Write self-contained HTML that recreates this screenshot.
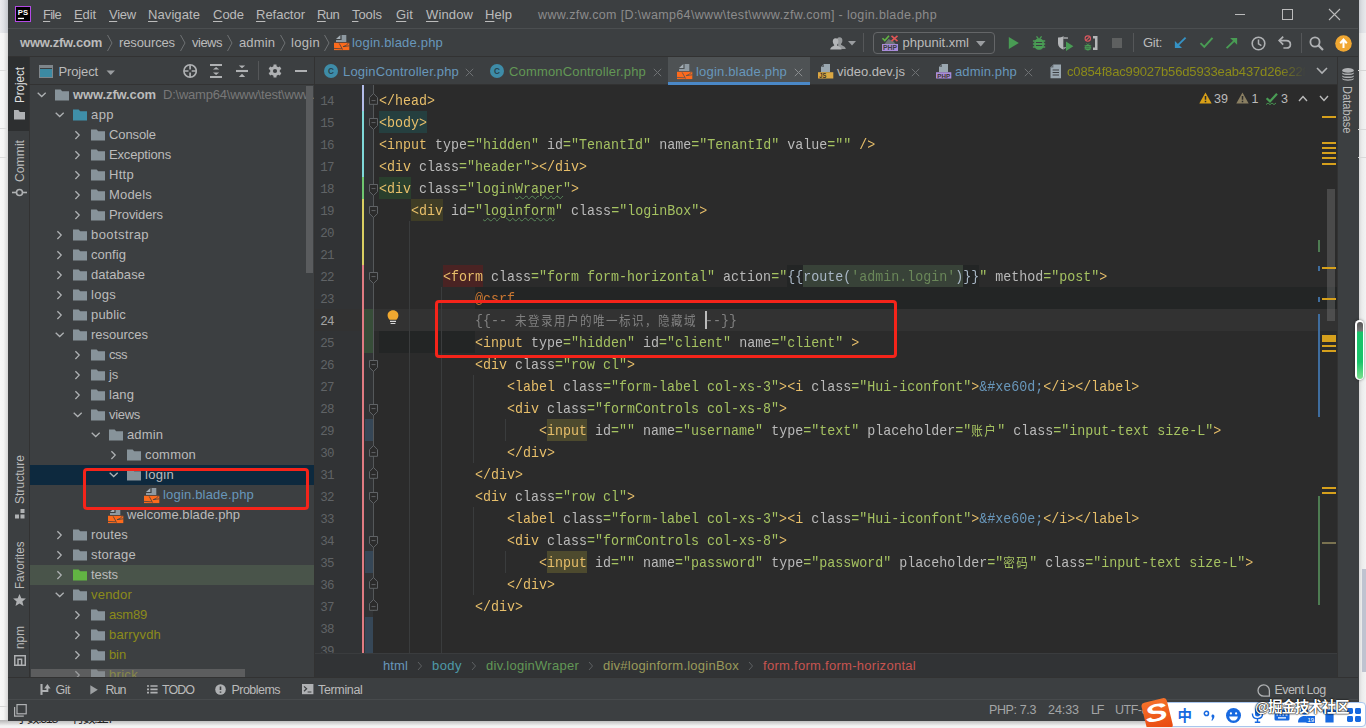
<!DOCTYPE html>
<html><head><meta charset="utf-8"><title>login.blade.php - PhpStorm</title>
<style>
*{box-sizing:border-box;margin:0;padding:0}
html,body{width:1366px;height:728px;overflow:hidden;background:#fff}
body{position:relative;font-family:"Liberation Sans","Noto Sans CJK SC",sans-serif;font-size:13px;color:#bbb}
.ln{position:absolute;left:0;width:19px;text-align:right;font-family:"Liberation Mono",monospace;font-size:12.5px;letter-spacing:-0.6px;height:22px;line-height:22px}
.cl{position:absolute;left:64px;height:22px;line-height:22px;font-family:"Liberation Mono","Noto Sans CJK SC",monospace;font-size:15px;color:#a9b7c6;white-space:pre;transform:scaleX(.88889);transform-origin:0 50%}
.cj{font-family:"Noto Sans CJK SC",sans-serif;font-size:13px;letter-spacing:1.625px;line-height:8px;display:inline-block;vertical-align:baseline}
.tg{color:#e8bf6a}.an{color:#bababa}.av{color:#a5c261}.cm{color:#808080}.en{color:#6897bb}
.typo{text-decoration:underline wavy #5a8a5a 1px;text-underline-offset:2px}
</style></head>
<body>
<div style="position:absolute;left:0;top:0;width:8px;height:728px;background:linear-gradient(90deg,#f7f7f7 0,#f4f4f4 45%,#d6d6d6 100%)"></div><div style="position:absolute;left:0;top:0;width:8px;height:33px;background:linear-gradient(90deg,#eaebee 0,#dfe1e5 45%,#c4c7cc 100%)"></div><div style="position:absolute;left:0px;top:720px;width:1366px;height:8px;background:#f3f3f3;"></div><div style="position:absolute;left:0;top:720px;width:1366px;height:6px;background:linear-gradient(#b4b4b4,#f3f3f3)"></div><div style="position:absolute;left:0px;top:705.5px;width:8px;height:1px;background:#d6d6d6;"></div><span style="position:absolute;left:16px;top:711.5px;line-height:14px;white-space:pre;color:#222;font-family:'Liberation Sans','Noto Sans CJK SC',sans-serif;font-size:12.5px;font-weight:normal;letter-spacing:-1.391px;">字数:518</span><span style="position:absolute;left:72px;top:711.5px;line-height:14px;white-space:pre;color:#222;font-family:'Liberation Sans','Noto Sans CJK SC',sans-serif;font-size:12.5px;font-weight:normal;letter-spacing:-1.391px;">行数:127</span><div style="position:absolute;left:1358px;top:0;width:8px;height:720px;background:linear-gradient(90deg,#d2d2d2 0,#ececec 50%,#f3f3f3 100%)"></div><div style="position:absolute;left:1358px;top:0;width:8px;height:33px;background:linear-gradient(90deg,#c2c5ca 0,#dcdee2 50%,#e8e9ec 100%)"></div><div style="position:absolute;left:7.5px;top:0px;width:1351px;height:720.5px;background:#3c3f41;"></div><div style="position:absolute;left:8px;top:28px;width:1350px;height:1px;background:#4b4e50;"></div><svg style="position:absolute;left:15px;top:6px;" width="16" height="16" viewBox="0 0 16 16"><rect x="0.5" y="0.5" width="15" height="15" fill="#000" stroke="#b34ae6" stroke-width="1"/><text x="2.8" y="9.3" font-family="Liberation Sans,sans-serif" font-weight="bold" font-size="8" fill="#fff" textLength="10.2" lengthAdjust="spacingAndGlyphs">PS</text><rect x="2.9" y="11.8" width="6.1" height="1.3" fill="#fff"/></svg><span style="position:absolute;left:43px;top:5.6px;line-height:18px;white-space:pre;color:#bbbbbb;font-family:'Liberation Sans','Noto Sans CJK SC',sans-serif;font-size:13px;font-weight:normal;letter-spacing:-0.738px;"><u style="text-underline-offset:1.5px">F</u>ile</span><span style="position:absolute;left:74px;top:5.6px;line-height:18px;white-space:pre;color:#bbbbbb;font-family:'Liberation Sans','Noto Sans CJK SC',sans-serif;font-size:13px;font-weight:normal;letter-spacing:-0.102px;"><u style="text-underline-offset:1.5px">E</u>dit</span><span style="position:absolute;left:109px;top:5.6px;line-height:18px;white-space:pre;color:#bbbbbb;font-family:'Liberation Sans','Noto Sans CJK SC',sans-serif;font-size:13px;font-weight:normal;letter-spacing:-0.238px;"><u style="text-underline-offset:1.5px">V</u>iew</span><span style="position:absolute;left:148px;top:5.6px;line-height:18px;white-space:pre;color:#bbbbbb;font-family:'Liberation Sans','Noto Sans CJK SC',sans-serif;font-size:13px;font-weight:normal;letter-spacing:0.086px;"><u style="text-underline-offset:1.5px">N</u>avigate</span><span style="position:absolute;left:213px;top:5.6px;line-height:18px;white-space:pre;color:#bbbbbb;font-family:'Liberation Sans','Noto Sans CJK SC',sans-serif;font-size:13px;font-weight:normal;letter-spacing:-0.020px;"><u style="text-underline-offset:1.5px">C</u>ode</span><span style="position:absolute;left:256px;top:5.6px;line-height:18px;white-space:pre;color:#bbbbbb;font-family:'Liberation Sans','Noto Sans CJK SC',sans-serif;font-size:13px;font-weight:normal;letter-spacing:-0.018px;"><u style="text-underline-offset:1.5px">R</u>efactor</span><span style="position:absolute;left:317px;top:5.6px;line-height:18px;white-space:pre;color:#bbbbbb;font-family:'Liberation Sans','Noto Sans CJK SC',sans-serif;font-size:13px;font-weight:normal;letter-spacing:-0.620px;"><u style="text-underline-offset:1.5px">R</u>un</span><span style="position:absolute;left:352px;top:5.6px;line-height:18px;white-space:pre;color:#bbbbbb;font-family:'Liberation Sans','Noto Sans CJK SC',sans-serif;font-size:13px;font-weight:normal;letter-spacing:-0.072px;"><u style="text-underline-offset:1.5px">T</u>ools</span><span style="position:absolute;left:396px;top:5.6px;line-height:18px;white-space:pre;color:#bbbbbb;font-family:'Liberation Sans','Noto Sans CJK SC',sans-serif;font-size:13px;font-weight:normal;letter-spacing:0.125px;"><u style="text-underline-offset:1.5px">G</u>it</span><span style="position:absolute;left:426px;top:5.6px;line-height:18px;white-space:pre;color:#bbbbbb;font-family:'Liberation Sans','Noto Sans CJK SC',sans-serif;font-size:13px;font-weight:normal;letter-spacing:0.125px;"><u style="text-underline-offset:1.5px">W</u>indow</span><span style="position:absolute;left:485px;top:5.6px;line-height:18px;white-space:pre;color:#bbbbbb;font-family:'Liberation Sans','Noto Sans CJK SC',sans-serif;font-size:13px;font-weight:normal;letter-spacing:0.062px;"><u style="text-underline-offset:1.5px">H</u>elp</span><span style="position:absolute;left:538px;top:5.5px;line-height:18px;white-space:pre;color:#8c8c8c;font-family:'Liberation Sans','Noto Sans CJK SC',sans-serif;font-size:12.5px;font-weight:normal;letter-spacing:0.351px;">www.zfw.com [D:\wamp64\www\test\www.zfw.com] - login.blade.php</span><svg style="position:absolute;left:1233.5px;top:7px;" width="14" height="14" viewBox="0 0 14 14"><path d="M1 7.5H11" stroke="#bbbbbb" stroke-width="1"/></svg><svg style="position:absolute;left:1281px;top:8px;" width="14" height="14" viewBox="0 0 14 14"><rect x="1.5" y="1.5" width="10" height="10" fill="none" stroke="#bbbbbb" stroke-width="1"/></svg><svg style="position:absolute;left:1328px;top:8px;" width="14" height="14" viewBox="0 0 14 14"><path d="M1 1L12 12M12 1L1 12" stroke="#bbbbbb" stroke-width="1.1"/></svg><div style="position:absolute;left:8px;top:56px;width:1350px;height:1px;background:#323232;"></div><span style="position:absolute;left:20px;top:34.0px;line-height:18px;white-space:pre;color:#bbbbbb;font-family:'Liberation Sans','Noto Sans CJK SC',sans-serif;font-size:13px;font-weight:bold;letter-spacing:-0.206px;">www.zfw.com</span><span style="position:absolute;left:119px;top:34.0px;line-height:18px;white-space:pre;color:#bbbbbb;font-family:'Liberation Sans','Noto Sans CJK SC',sans-serif;font-size:13px;font-weight:normal;letter-spacing:-0.120px;">resources</span><span style="position:absolute;left:192px;top:34.0px;line-height:18px;white-space:pre;color:#bbbbbb;font-family:'Liberation Sans','Noto Sans CJK SC',sans-serif;font-size:13px;font-weight:normal;letter-spacing:-0.503px;">views</span><span style="position:absolute;left:239px;top:34.0px;line-height:18px;white-space:pre;color:#bbbbbb;font-family:'Liberation Sans','Noto Sans CJK SC',sans-serif;font-size:13px;font-weight:normal;letter-spacing:0.116px;">admin</span><span style="position:absolute;left:291px;top:34.0px;line-height:18px;white-space:pre;color:#bbbbbb;font-family:'Liberation Sans','Noto Sans CJK SC',sans-serif;font-size:13px;font-weight:normal;letter-spacing:0.306px;">login</span><svg style="position:absolute;left:106px;top:34px;" width="8" height="18" viewBox="0 0 8 18"><path d="M1.5 1L6 9L1.5 17" fill="none" stroke="#6e7173" stroke-width="1"/></svg><svg style="position:absolute;left:179px;top:34px;" width="8" height="18" viewBox="0 0 8 18"><path d="M1.5 1L6 9L1.5 17" fill="none" stroke="#6e7173" stroke-width="1"/></svg><svg style="position:absolute;left:226px;top:34px;" width="8" height="18" viewBox="0 0 8 18"><path d="M1.5 1L6 9L1.5 17" fill="none" stroke="#6e7173" stroke-width="1"/></svg><svg style="position:absolute;left:279px;top:34px;" width="8" height="18" viewBox="0 0 8 18"><path d="M1.5 1L6 9L1.5 17" fill="none" stroke="#6e7173" stroke-width="1"/></svg><svg style="position:absolute;left:323px;top:34px;" width="8" height="18" viewBox="0 0 8 18"><path d="M1.5 1L6 9L1.5 17" fill="none" stroke="#6e7173" stroke-width="1"/></svg><span style="position:absolute;left:352px;top:34.0px;line-height:18px;white-space:pre;color:#6897bb;font-family:'Liberation Sans','Noto Sans CJK SC',sans-serif;font-size:13px;font-weight:normal;letter-spacing:0.186px;">login.blade.php</span><svg style="position:absolute;left:333.8px;top:34px;" width="16" height="17" viewBox="0 0 16 17"><path d="M6.4 0.9V5H2Z" fill="#a4aeb5"/><path d="M7.6 0.9H12.3V8H2V6.1H7.6Z" fill="#8e99a1"/><rect x="0" y="8.8" width="15.3" height="7.3" fill="#fc6a1c"/><path d="M0 14.4L7.9 14.8M9.2 12.6L15.3 11.8M5.2 9.4L8.6 15.6M14.6 8.8L12 11.6L9.2 12.6" stroke="#3c3f41" stroke-width="0.9" fill="none" opacity="0.85"/></svg><svg style="position:absolute;left:830px;top:36px;" width="16" height="14" viewBox="0 0 16 14"><path d="M9.5 1.2C11.6 1.2 12.6 2.8 12.4 4.8C12.2 6.6 11.4 7.6 10.9 8.2C10.9 9.4 15.5 9.8 15.8 13H6.5C7 11 8.5 10.2 8.2 8.4C7.4 7.6 6.8 6.4 6.7 4.8C6.6 2.8 7.6 1.2 9.5 1.2Z" fill="#96999b"/><path d="M5.6 2.2C7.6 2.2 8.6 3.8 8.4 5.8C8.2 7.4 7.5 8.4 7 9C7 10.2 11.2 10.6 11.6 13.5H0.2C0.6 10.6 4.3 10.2 4.3 9C3.7 8.4 3 7.4 2.8 5.8C2.6 3.8 3.6 2.2 5.6 2.2Z" fill="#b4b6b8"/></svg><svg style="position:absolute;left:848px;top:41px;" width="8" height="5" viewBox="0 0 8 5"><path d="M0 0H8L4 4.5Z" fill="#9a9da0"/></svg><div style="position:absolute;left:863px;top:33px;width:1px;height:19px;background:#555759;"></div><div style="position:absolute;left:873px;top:32px;width:122px;height:22px;border:1px solid #646668;border-radius:4px"></div><svg style="position:absolute;left:881px;top:35px;" width="18" height="17" viewBox="0 0 18 17"><path d="M3 9.5L7.5 4L12.5 6.5L15 9.5Z" fill="#6e7476"/><rect x="1" y="9" width="16" height="7" fill="#a98cd9"/><text x="9" y="15.4" text-anchor="middle" font-family="Liberation Sans,sans-serif" font-weight="bold" font-size="6.6" fill="#3c3f41" textLength="14" lengthAdjust="spacingAndGlyphs">PHP</text><path d="M1.5 3.2L3.8 5.6L8 0.8" stroke="#62b543" stroke-width="1.6" fill="none"/><path d="M10.5 0.8L16.5 6.2M16.5 0.8L10.5 6.2" stroke="#e05555" stroke-width="1.6"/></svg><span style="position:absolute;left:902.5px;top:34.0px;line-height:18px;white-space:pre;color:#bbbbbb;font-family:'Liberation Sans','Noto Sans CJK SC',sans-serif;font-size:13px;font-weight:normal;letter-spacing:0.001px;">phpunit.xml</span><svg style="position:absolute;left:976px;top:41px;" width="10" height="6" viewBox="0 0 10 6"><path d="M0 0H9.5L4.75 5.5Z" fill="#9a9da0"/></svg><svg style="position:absolute;left:1008px;top:36px;" width="12" height="14" viewBox="0 0 12 14"><path d="M0.8 1L10.8 7L0.8 13Z" fill="#499c54"/></svg><svg style="position:absolute;left:1032px;top:36px;" width="14" height="14" viewBox="0 0 14 14"><path d="M4.5 0.4L6.5 2.9M9.6 0.4L7.6 2.9" stroke="#499c54" stroke-width="1.3"/><path d="M7.05 2.6C10 2.6 12 4.6 12 8.2C12 11.6 10 13.8 7.05 13.8C4.1 13.8 2.1 11.6 2.1 8.2C2.1 4.6 4.1 2.6 7.05 2.6Z" fill="#499c54"/><path d="M0.9 5H13.2M0.9 8H13.2M0.9 10.9H13.2" stroke="#499c54" stroke-width="1.5"/><path d="M3.9 6.55H10.2M3.9 9.5H10.2" stroke="#3c3f41" stroke-width="1.05"/></svg><svg style="position:absolute;left:1057px;top:36px;" width="17" height="16" viewBox="0 0 17 16"><path d="M1 1.5C3 1.6 4.6 1.2 6 0.6C7.4 1.2 9 1.6 11 1.5V7.5C11 10.4 8.6 12.4 6 13.4C3.4 12.4 1 10.4 1 7.5Z" fill="#b4b6b8"/><path d="M6 0.6C7.4 1.2 9 1.6 11 1.5V7.5C11 10.4 8.6 12.4 6 13.4Z" fill="#8a8d8f"/><rect x="6.5" y="3" width="4.5" height="8" fill="#3c3f41"/><path d="M9 5.6L16.4 10.2L9 15Z" fill="#499c54"/></svg><svg style="position:absolute;left:1083px;top:35px;" width="16" height="16" viewBox="0 0 16 16"><circle cx="4.8" cy="3.6" r="2.7" fill="none" stroke="#db5860" stroke-width="1.1"/><path d="M3 5.4L6.6 1.8" stroke="#db5860" stroke-width="1.1"/><g transform="translate(1,8) scale(0.55)"><path d="M4.5 0.4L6.5 2.9M9.6 0.4L7.6 2.9" stroke="#499c54" stroke-width="1.3"/><path d="M7.05 2.6C10 2.6 12 4.6 12 8.2C12 11.6 10 13.8 7.05 13.8C4.1 13.8 2.1 11.6 2.1 8.2C2.1 4.6 4.1 2.6 7.05 2.6Z" fill="#499c54"/><path d="M0.9 5H13.2M0.9 8H13.2M0.9 10.9H13.2" stroke="#499c54" stroke-width="1.5"/><path d="M3.9 6.55H10.2M3.9 9.5H10.2" stroke="#3c3f41" stroke-width="1.05"/></g><path d="M10 1H14.5V15H10V12.6H12V3.4H10Z" fill="#b4b6b8"/></svg><div style="position:absolute;left:1112px;top:38px;width:10px;height:10.2px;background:#5e6060;"></div><div style="position:absolute;left:1133px;top:33px;width:1px;height:19px;background:#555759;"></div><span style="position:absolute;left:1143px;top:34.0px;line-height:18px;white-space:pre;color:#bbbbbb;font-family:'Liberation Sans','Noto Sans CJK SC',sans-serif;font-size:13px;font-weight:normal;letter-spacing:-0.309px;">Git:</span><svg style="position:absolute;left:1174px;top:36px;" width="13" height="13" viewBox="0 0 13 13"><path d="M11.6 1.6L4 9.2" stroke="#3592c4" stroke-width="1.9"/><path d="M0.9 5.1V11.9H8Z" fill="#3592c4"/></svg><svg style="position:absolute;left:1199px;top:36px;" width="15" height="13" viewBox="0 0 15 13"><path d="M1.5 7.1L5.3 10.9L13.5 1.9" fill="none" stroke="#499c54" stroke-width="2"/></svg><svg style="position:absolute;left:1225px;top:36px;" width="13" height="13" viewBox="0 0 13 13"><path d="M1.6 12.1L9.4 4.6" stroke="#499c54" stroke-width="1.9"/><path d="M5.1 2.1L12.1 1.9V8.8Z" fill="#499c54"/></svg><svg style="position:absolute;left:1250.5px;top:35.5px;" width="15" height="15" viewBox="0 0 15 15"><circle cx="7.5" cy="7.5" r="6.3" fill="none" stroke="#afb1b3" stroke-width="1.6"/><path d="M7.5 3.6V7.8L10.4 9.6" fill="none" stroke="#afb1b3" stroke-width="1.5"/></svg><svg style="position:absolute;left:1277px;top:35px;" width="15" height="15" viewBox="0 0 15 15"><path d="M2.4 5.6H9.2C11.8 5.6 13.4 7.2 13.4 9.4C13.4 11.6 11.8 13 9.4 13H6.4" fill="none" stroke="#afb1b3" stroke-width="1.7"/><path d="M6.2 1.6L2.2 5.6L6.2 9.6" fill="none" stroke="#afb1b3" stroke-width="1.7"/></svg><div style="position:absolute;left:1300.5px;top:33px;width:1px;height:20px;background:#555759;"></div><svg style="position:absolute;left:1309px;top:36px;" width="15" height="15" viewBox="0 0 15 15"><circle cx="6" cy="6" r="4.6" fill="none" stroke="#afb1b3" stroke-width="1.8"/><path d="M9.4 9.4L14 14" stroke="#afb1b3" stroke-width="2.2"/></svg><svg style="position:absolute;left:1334.5px;top:34.5px;" width="17" height="17" viewBox="0 0 17 17"><circle cx="8.5" cy="8.5" r="8.3" fill="#f0a732"/><path d="M8.5 13V5M5.2 8.2L8.5 4.6L11.8 8.2" fill="none" stroke="#fff" stroke-width="2"/></svg><div style="position:absolute;left:8px;top:57px;width:21px;height:74px;background:#2d2f30;"></div><div style="position:absolute;left:29px;top:57px;width:1px;height:621px;background:#323232;"></div><span style="position:absolute;left:12.0px;top:103px;line-height:16px;white-space:pre;color:#e0e0e0;font-family:'Liberation Sans','Noto Sans CJK SC',sans-serif;font-size:12.5px;transform-origin:0 0;transform:rotate(-90deg) scaleX(0.9253)">Project</span><svg style="position:absolute;left:14px;top:109.5px;" width="11" height="10" viewBox="0 0 11 10"><path d="M0 0H4.4L5.8 2H11V9.5H0Z" fill="#afb1b3"/></svg><span style="position:absolute;left:12.0px;top:182px;line-height:16px;white-space:pre;color:#bbbbbb;font-family:'Liberation Sans','Noto Sans CJK SC',sans-serif;font-size:12.5px;transform-origin:0 0;transform:rotate(-90deg) scaleX(0.9753)">Commit</span><svg style="position:absolute;left:12px;top:184.5px;" width="15" height="15" viewBox="0 0 15 15"><path d="M0 7.5H15" stroke="#afb1b3" stroke-width="1.6"/><circle cx="7.5" cy="7.5" r="3" fill="#3c3f41" stroke="#afb1b3" stroke-width="1.6"/></svg><span style="position:absolute;left:12.0px;top:504px;line-height:16px;white-space:pre;color:#bbbbbb;font-family:'Liberation Sans','Noto Sans CJK SC',sans-serif;font-size:12.5px;transform-origin:0 0;transform:rotate(-90deg) scaleX(0.9661)">Structure</span><svg style="position:absolute;left:15px;top:509px;" width="10" height="10" viewBox="0 0 10 10"><rect x="0" y="5.5" width="4" height="4" fill="#afb1b3"/><rect x="5.5" y="5.5" width="4" height="4" fill="#afb1b3"/><rect x="5.5" y="0" width="4" height="4" fill="#afb1b3"/></svg><span style="position:absolute;left:12.0px;top:589px;line-height:16px;white-space:pre;color:#bbbbbb;font-family:'Liberation Sans','Noto Sans CJK SC',sans-serif;font-size:12.5px;transform-origin:0 0;transform:rotate(-90deg) scaleX(0.9240)">Favorites</span><svg style="position:absolute;left:13px;top:594px;" width="13" height="12" viewBox="0 0 13 12"><path d="M6.5 0L8.3 4.2L12.9 4.6L9.4 7.6L10.5 12L6.5 9.6L2.5 12L3.6 7.6L0.1 4.6L4.7 4.2Z" fill="#afb1b3"/></svg><span style="position:absolute;left:12.0px;top:649px;line-height:16px;white-space:pre;color:#bbbbbb;font-family:'Liberation Sans','Noto Sans CJK SC',sans-serif;font-size:12.5px;transform-origin:0 0;transform:rotate(-90deg) scaleX(0.9454)">npm</span><svg style="position:absolute;left:14px;top:655px;" width="12" height="11" viewBox="0 0 12 11"><rect x="0.75" y="0.75" width="10.5" height="9.5" fill="none" stroke="#afb1b3" stroke-width="1.5"/><path d="M4 10V4.2H7.6V10" fill="none" stroke="#afb1b3" stroke-width="1.5"/></svg><div style="position:absolute;left:30px;top:84px;width:285px;height:1px;background:#323232;"></div><span style="position:absolute;left:58.5px;top:63.0px;line-height:18px;white-space:pre;color:#bbbbbb;font-family:'Liberation Sans','Noto Sans CJK SC',sans-serif;font-size:13px;font-weight:normal;letter-spacing:-0.138px;">Project</span><svg style="position:absolute;left:39px;top:65px;" width="14" height="13" viewBox="0 0 14 13"><rect x="0.5" y="0.5" width="13" height="12" fill="#3c8aa3" stroke="#7f868b" stroke-width="1"/><rect x="0" y="0" width="14" height="3" fill="#7f868b"/><rect x="1" y="3" width="12" height="1" fill="#3c3f41"/></svg><svg style="position:absolute;left:106px;top:70px;" width="10" height="6" viewBox="0 0 10 6"><path d="M0.5 0.5H9L4.75 5Z" fill="#9a9da0"/></svg><svg style="position:absolute;left:183px;top:64px;" width="14.4" height="14.4" viewBox="0 0 14.4 14.4"><circle cx="7.1" cy="7" r="6.2" fill="none" stroke="#afb1b3" stroke-width="1.6"/><path d="M7.1 1V5.4M7.1 8.6V13M1 7H5.5M8.7 7H13.2" stroke="#afb1b3" stroke-width="1.7"/></svg><svg style="position:absolute;left:210px;top:64px;" width="12.2" height="14" viewBox="0 0 12.2 14"><path d="M0 1H12.2M0 13H12.2" stroke="#afb1b3" stroke-width="2"/><path d="M6.1 2.9L9.2 5.4H3ZM6.1 11.1L9.2 8.4H3Z" fill="#afb1b3"/></svg><svg style="position:absolute;left:236px;top:64px;" width="12" height="14" viewBox="0 0 12 14"><path d="M0 7H12" stroke="#afb1b3" stroke-width="2.1"/><path d="M6 4.2L9.2 1.4H2.8ZM6 9.8L9.2 13H2.8Z" fill="#afb1b3"/></svg><div style="position:absolute;left:258px;top:61px;width:1px;height:19px;background:#555759;"></div><svg style="position:absolute;left:268px;top:64px;" width="14" height="14" viewBox="0 0 14 14"><path d="M5.54 0.46L8.46 0.46L8.56 2.36L10.24 3.32L11.93 2.46L13.39 5.00L11.80 6.03L11.80 7.97L13.39 9.00L11.93 11.54L10.24 10.68L8.56 11.64L8.46 13.54L5.54 13.54L5.44 11.64L3.76 10.68L2.07 11.54L0.61 9.00L2.20 7.97L2.20 6.03L0.61 5.00L2.07 2.46L3.76 3.32L5.44 2.36Z" fill="#afb1b3"/><circle cx="7" cy="7" r="2.1" fill="#3c3f41"/></svg><div style="position:absolute;left:295px;top:69.9px;width:12.2px;height:2.1px;background:#afb1b3;"></div><div style="position:absolute;left:30px;top:84px;width:284px;height:594px;overflow:hidden"><svg style="position:absolute;left:7px;top:6px;" width="11" height="11" viewBox="0 0 11 11"><path d="M0.7 2.7L4.7 6.5L8.7 2.7" fill="none" stroke="#aeb1b3" stroke-width="1.3"/></svg><svg style="position:absolute;left:25px;top:5px;" width="14" height="12" viewBox="0 0 14 12"><path d="M0 0.5H5.6L7.2 2.3H14V11.5H0Z" fill="#87939a"/></svg><span style="position:absolute;left:43px;top:2.0px;line-height:18px;white-space:pre;color:#bbbbbb;font-family:'Liberation Sans','Noto Sans CJK SC',sans-serif;font-size:13px;font-weight:bold;letter-spacing:-0.115px;">www.zfw.com</span><span style="position:absolute;left:133px;top:2.0px;line-height:18px;white-space:pre;color:#787878;font-family:'Liberation Sans','Noto Sans CJK SC',sans-serif;font-size:13px;font-weight:normal;letter-spacing:-0.222px;">D:\wamp64\www\test\www.zfw.com</span><svg style="position:absolute;left:25px;top:26px;" width="11" height="11" viewBox="0 0 11 11"><path d="M0.7 2.7L4.7 6.5L8.7 2.7" fill="none" stroke="#aeb1b3" stroke-width="1.3"/></svg><svg style="position:absolute;left:43px;top:25px;" width="14" height="12" viewBox="0 0 14 12"><path d="M0 0.5H5.6L7.2 2.3H14V11.5H0Z" fill="#3f8fa9"/></svg><span style="position:absolute;left:61px;top:22.0px;line-height:18px;white-space:pre;color:#bbbbbb;font-family:'Liberation Sans','Noto Sans CJK SC',sans-serif;font-size:13px;font-weight:normal;letter-spacing:0.432px;">app</span><svg style="position:absolute;left:43px;top:46px;" width="11" height="11" viewBox="0 0 11 11"><path d="M2.4 1.2L6.2 5.1L2.4 9" fill="none" stroke="#aeb1b3" stroke-width="1.3"/></svg><svg style="position:absolute;left:61px;top:45px;" width="14" height="12" viewBox="0 0 14 12"><path d="M0 0.5H5.6L7.2 2.3H14V11.5H0Z" fill="#87939a"/></svg><span style="position:absolute;left:79px;top:42.0px;line-height:18px;white-space:pre;color:#bbbbbb;font-family:'Liberation Sans','Noto Sans CJK SC',sans-serif;font-size:13px;font-weight:normal;letter-spacing:-0.100px;">Console</span><svg style="position:absolute;left:43px;top:66px;" width="11" height="11" viewBox="0 0 11 11"><path d="M2.4 1.2L6.2 5.1L2.4 9" fill="none" stroke="#aeb1b3" stroke-width="1.3"/></svg><svg style="position:absolute;left:61px;top:65px;" width="14" height="12" viewBox="0 0 14 12"><path d="M0 0.5H5.6L7.2 2.3H14V11.5H0Z" fill="#87939a"/></svg><span style="position:absolute;left:79px;top:62.0px;line-height:18px;white-space:pre;color:#bbbbbb;font-family:'Liberation Sans','Noto Sans CJK SC',sans-serif;font-size:13px;font-weight:normal;letter-spacing:-0.159px;">Exceptions</span><svg style="position:absolute;left:43px;top:86px;" width="11" height="11" viewBox="0 0 11 11"><path d="M2.4 1.2L6.2 5.1L2.4 9" fill="none" stroke="#aeb1b3" stroke-width="1.3"/></svg><svg style="position:absolute;left:61px;top:85px;" width="14" height="12" viewBox="0 0 14 12"><path d="M0 0.5H5.6L7.2 2.3H14V11.5H0Z" fill="#87939a"/></svg><span style="position:absolute;left:79px;top:82.0px;line-height:18px;white-space:pre;color:#bbbbbb;font-family:'Liberation Sans','Noto Sans CJK SC',sans-serif;font-size:13px;font-weight:normal;letter-spacing:0.289px;">Http</span><svg style="position:absolute;left:43px;top:106px;" width="11" height="11" viewBox="0 0 11 11"><path d="M2.4 1.2L6.2 5.1L2.4 9" fill="none" stroke="#aeb1b3" stroke-width="1.3"/></svg><svg style="position:absolute;left:61px;top:105px;" width="14" height="12" viewBox="0 0 14 12"><path d="M0 0.5H5.6L7.2 2.3H14V11.5H0Z" fill="#87939a"/></svg><span style="position:absolute;left:79px;top:102.0px;line-height:18px;white-space:pre;color:#bbbbbb;font-family:'Liberation Sans','Noto Sans CJK SC',sans-serif;font-size:13px;font-weight:normal;letter-spacing:0.180px;">Models</span><svg style="position:absolute;left:43px;top:126px;" width="11" height="11" viewBox="0 0 11 11"><path d="M2.4 1.2L6.2 5.1L2.4 9" fill="none" stroke="#aeb1b3" stroke-width="1.3"/></svg><svg style="position:absolute;left:61px;top:125px;" width="14" height="12" viewBox="0 0 14 12"><path d="M0 0.5H5.6L7.2 2.3H14V11.5H0Z" fill="#87939a"/></svg><span style="position:absolute;left:79px;top:122.0px;line-height:18px;white-space:pre;color:#bbbbbb;font-family:'Liberation Sans','Noto Sans CJK SC',sans-serif;font-size:13px;font-weight:normal;letter-spacing:-0.102px;">Providers</span><svg style="position:absolute;left:25px;top:146px;" width="11" height="11" viewBox="0 0 11 11"><path d="M2.4 1.2L6.2 5.1L2.4 9" fill="none" stroke="#aeb1b3" stroke-width="1.3"/></svg><svg style="position:absolute;left:43px;top:145px;" width="14" height="12" viewBox="0 0 14 12"><path d="M0 0.5H5.6L7.2 2.3H14V11.5H0Z" fill="#87939a"/></svg><span style="position:absolute;left:61px;top:142.0px;line-height:18px;white-space:pre;color:#bbbbbb;font-family:'Liberation Sans','Noto Sans CJK SC',sans-serif;font-size:13px;font-weight:normal;letter-spacing:0.422px;">bootstrap</span><svg style="position:absolute;left:25px;top:166px;" width="11" height="11" viewBox="0 0 11 11"><path d="M2.4 1.2L6.2 5.1L2.4 9" fill="none" stroke="#aeb1b3" stroke-width="1.3"/></svg><svg style="position:absolute;left:43px;top:165px;" width="14" height="12" viewBox="0 0 14 12"><path d="M0 0.5H5.6L7.2 2.3H14V11.5H0Z" fill="#87939a"/></svg><span style="position:absolute;left:61px;top:162.0px;line-height:18px;white-space:pre;color:#bbbbbb;font-family:'Liberation Sans','Noto Sans CJK SC',sans-serif;font-size:13px;font-weight:normal;letter-spacing:0.049px;">config</span><svg style="position:absolute;left:25px;top:186px;" width="11" height="11" viewBox="0 0 11 11"><path d="M2.4 1.2L6.2 5.1L2.4 9" fill="none" stroke="#aeb1b3" stroke-width="1.3"/></svg><svg style="position:absolute;left:43px;top:185px;" width="14" height="12" viewBox="0 0 14 12"><path d="M0 0.5H5.6L7.2 2.3H14V11.5H0Z" fill="#87939a"/></svg><span style="position:absolute;left:61px;top:182.0px;line-height:18px;white-space:pre;color:#bbbbbb;font-family:'Liberation Sans','Noto Sans CJK SC',sans-serif;font-size:13px;font-weight:normal;letter-spacing:0.062px;">database</span><svg style="position:absolute;left:25px;top:206px;" width="11" height="11" viewBox="0 0 11 11"><path d="M2.4 1.2L6.2 5.1L2.4 9" fill="none" stroke="#aeb1b3" stroke-width="1.3"/></svg><svg style="position:absolute;left:43px;top:205px;" width="14" height="12" viewBox="0 0 14 12"><path d="M0 0.5H5.6L7.2 2.3H14V11.5H0Z" fill="#87939a"/></svg><span style="position:absolute;left:61px;top:202.0px;line-height:18px;white-space:pre;color:#bbbbbb;font-family:'Liberation Sans','Noto Sans CJK SC',sans-serif;font-size:13px;font-weight:normal;letter-spacing:0.285px;">logs</span><svg style="position:absolute;left:25px;top:226px;" width="11" height="11" viewBox="0 0 11 11"><path d="M2.4 1.2L6.2 5.1L2.4 9" fill="none" stroke="#aeb1b3" stroke-width="1.3"/></svg><svg style="position:absolute;left:43px;top:225px;" width="14" height="12" viewBox="0 0 14 12"><path d="M0 0.5H5.6L7.2 2.3H14V11.5H0Z" fill="#87939a"/></svg><span style="position:absolute;left:61px;top:222.0px;line-height:18px;white-space:pre;color:#bbbbbb;font-family:'Liberation Sans','Noto Sans CJK SC',sans-serif;font-size:13px;font-weight:normal;letter-spacing:0.172px;">public</span><svg style="position:absolute;left:25px;top:246px;" width="11" height="11" viewBox="0 0 11 11"><path d="M0.7 2.7L4.7 6.5L8.7 2.7" fill="none" stroke="#aeb1b3" stroke-width="1.3"/></svg><svg style="position:absolute;left:43px;top:245px;" width="14" height="12" viewBox="0 0 14 12"><path d="M0 0.5H5.6L7.2 2.3H14V11.5H0Z" fill="#87939a"/></svg><span style="position:absolute;left:61px;top:242.0px;line-height:18px;white-space:pre;color:#bbbbbb;font-family:'Liberation Sans','Noto Sans CJK SC',sans-serif;font-size:13px;font-weight:normal;letter-spacing:-0.009px;">resources</span><svg style="position:absolute;left:43px;top:266px;" width="11" height="11" viewBox="0 0 11 11"><path d="M2.4 1.2L6.2 5.1L2.4 9" fill="none" stroke="#aeb1b3" stroke-width="1.3"/></svg><svg style="position:absolute;left:61px;top:265px;" width="14" height="12" viewBox="0 0 14 12"><path d="M0 0.5H5.6L7.2 2.3H14V11.5H0Z" fill="#87939a"/></svg><span style="position:absolute;left:79px;top:262.0px;line-height:18px;white-space:pre;color:#bbbbbb;font-family:'Liberation Sans','Noto Sans CJK SC',sans-serif;font-size:13px;font-weight:normal;letter-spacing:-0.500px;">css</span><svg style="position:absolute;left:43px;top:286px;" width="11" height="11" viewBox="0 0 11 11"><path d="M2.4 1.2L6.2 5.1L2.4 9" fill="none" stroke="#aeb1b3" stroke-width="1.3"/></svg><svg style="position:absolute;left:61px;top:285px;" width="14" height="12" viewBox="0 0 14 12"><path d="M0 0.5H5.6L7.2 2.3H14V11.5H0Z" fill="#87939a"/></svg><span style="position:absolute;left:79px;top:282.0px;line-height:18px;white-space:pre;color:#bbbbbb;font-family:'Liberation Sans','Noto Sans CJK SC',sans-serif;font-size:13px;font-weight:normal;letter-spacing:-0.195px;">js</span><svg style="position:absolute;left:43px;top:306px;" width="11" height="11" viewBox="0 0 11 11"><path d="M2.4 1.2L6.2 5.1L2.4 9" fill="none" stroke="#aeb1b3" stroke-width="1.3"/></svg><svg style="position:absolute;left:61px;top:305px;" width="14" height="12" viewBox="0 0 14 12"><path d="M0 0.5H5.6L7.2 2.3H14V11.5H0Z" fill="#87939a"/></svg><span style="position:absolute;left:79px;top:302.0px;line-height:18px;white-space:pre;color:#bbbbbb;font-family:'Liberation Sans','Noto Sans CJK SC',sans-serif;font-size:13px;font-weight:normal;letter-spacing:0.105px;">lang</span><svg style="position:absolute;left:43px;top:326px;" width="11" height="11" viewBox="0 0 11 11"><path d="M0.7 2.7L4.7 6.5L8.7 2.7" fill="none" stroke="#aeb1b3" stroke-width="1.3"/></svg><svg style="position:absolute;left:61px;top:325px;" width="14" height="12" viewBox="0 0 14 12"><path d="M0 0.5H5.6L7.2 2.3H14V11.5H0Z" fill="#87939a"/></svg><span style="position:absolute;left:79px;top:322.0px;line-height:18px;white-space:pre;color:#bbbbbb;font-family:'Liberation Sans','Noto Sans CJK SC',sans-serif;font-size:13px;font-weight:normal;letter-spacing:-0.303px;">views</span><svg style="position:absolute;left:61px;top:346px;" width="11" height="11" viewBox="0 0 11 11"><path d="M0.7 2.7L4.7 6.5L8.7 2.7" fill="none" stroke="#aeb1b3" stroke-width="1.3"/></svg><svg style="position:absolute;left:79px;top:345px;" width="14" height="12" viewBox="0 0 14 12"><path d="M0 0.5H5.6L7.2 2.3H14V11.5H0Z" fill="#87939a"/></svg><span style="position:absolute;left:97px;top:342.0px;line-height:18px;white-space:pre;color:#bbbbbb;font-family:'Liberation Sans','Noto Sans CJK SC',sans-serif;font-size:13px;font-weight:normal;letter-spacing:0.116px;">admin</span><svg style="position:absolute;left:79px;top:366px;" width="11" height="11" viewBox="0 0 11 11"><path d="M2.4 1.2L6.2 5.1L2.4 9" fill="none" stroke="#aeb1b3" stroke-width="1.3"/></svg><svg style="position:absolute;left:97px;top:365px;" width="14" height="12" viewBox="0 0 14 12"><path d="M0 0.5H5.6L7.2 2.3H14V11.5H0Z" fill="#87939a"/></svg><span style="position:absolute;left:115px;top:362.0px;line-height:18px;white-space:pre;color:#bbbbbb;font-family:'Liberation Sans','Noto Sans CJK SC',sans-serif;font-size:13px;font-weight:normal;letter-spacing:0.190px;">common</span><div style="position:absolute;left:0px;top:381px;width:284px;height:20px;background:#0d293e;"></div><svg style="position:absolute;left:79px;top:386px;" width="11" height="11" viewBox="0 0 11 11"><path d="M0.7 2.7L4.7 6.5L8.7 2.7" fill="none" stroke="#aeb1b3" stroke-width="1.3"/></svg><svg style="position:absolute;left:97px;top:385px;" width="14" height="12" viewBox="0 0 14 12"><path d="M0 0.5H5.6L7.2 2.3H14V11.5H0Z" fill="#87939a"/></svg><span style="position:absolute;left:115px;top:382.0px;line-height:18px;white-space:pre;color:#bbbbbb;font-family:'Liberation Sans','Noto Sans CJK SC',sans-serif;font-size:13px;font-weight:normal;letter-spacing:0.306px;">login</span><svg style="position:absolute;left:114px;top:402.5px;" width="16" height="17" viewBox="0 0 16 17"><path d="M6.4 0.9V5H2Z" fill="#a4aeb5"/><path d="M7.6 0.9H12.3V8H2V6.1H7.6Z" fill="#8e99a1"/><rect x="0" y="8.8" width="15.3" height="7.3" fill="#fc6a1c"/><path d="M0 14.4L7.9 14.8M9.2 12.6L15.3 11.8M5.2 9.4L8.6 15.6M14.6 8.8L12 11.6L9.2 12.6" stroke="#3c3f41" stroke-width="0.9" fill="none" opacity="0.85"/></svg><span style="position:absolute;left:133px;top:402.0px;line-height:18px;white-space:pre;color:#6897bb;font-family:'Liberation Sans','Noto Sans CJK SC',sans-serif;font-size:13px;font-weight:normal;letter-spacing:0.186px;">login.blade.php</span><svg style="position:absolute;left:78px;top:422.5px;" width="16" height="17" viewBox="0 0 16 17"><path d="M6.4 0.9V5H2Z" fill="#a4aeb5"/><path d="M7.6 0.9H12.3V8H2V6.1H7.6Z" fill="#8e99a1"/><rect x="0" y="8.8" width="15.3" height="7.3" fill="#fc6a1c"/><path d="M0 14.4L7.9 14.8M9.2 12.6L15.3 11.8M5.2 9.4L8.6 15.6M14.6 8.8L12 11.6L9.2 12.6" stroke="#3c3f41" stroke-width="0.9" fill="none" opacity="0.85"/></svg><span style="position:absolute;left:97px;top:422.0px;line-height:18px;white-space:pre;color:#bbbbbb;font-family:'Liberation Sans','Noto Sans CJK SC',sans-serif;font-size:13px;font-weight:normal;letter-spacing:0.057px;">welcome.blade.php</span><svg style="position:absolute;left:25px;top:446px;" width="11" height="11" viewBox="0 0 11 11"><path d="M2.4 1.2L6.2 5.1L2.4 9" fill="none" stroke="#aeb1b3" stroke-width="1.3"/></svg><svg style="position:absolute;left:43px;top:445px;" width="14" height="12" viewBox="0 0 14 12"><path d="M0 0.5H5.6L7.2 2.3H14V11.5H0Z" fill="#87939a"/></svg><span style="position:absolute;left:61px;top:442.0px;line-height:18px;white-space:pre;color:#bbbbbb;font-family:'Liberation Sans','Noto Sans CJK SC',sans-serif;font-size:13px;font-weight:normal;letter-spacing:0.143px;">routes</span><svg style="position:absolute;left:25px;top:466px;" width="11" height="11" viewBox="0 0 11 11"><path d="M2.4 1.2L6.2 5.1L2.4 9" fill="none" stroke="#aeb1b3" stroke-width="1.3"/></svg><svg style="position:absolute;left:43px;top:465px;" width="14" height="12" viewBox="0 0 14 12"><path d="M0 0.5H5.6L7.2 2.3H14V11.5H0Z" fill="#87939a"/></svg><span style="position:absolute;left:61px;top:462.0px;line-height:18px;white-space:pre;color:#bbbbbb;font-family:'Liberation Sans','Noto Sans CJK SC',sans-serif;font-size:13px;font-weight:normal;letter-spacing:0.232px;">storage</span><div style="position:absolute;left:0px;top:481px;width:284px;height:20px;background:#49544a;"></div><svg style="position:absolute;left:25px;top:486px;" width="11" height="11" viewBox="0 0 11 11"><path d="M2.4 1.2L6.2 5.1L2.4 9" fill="none" stroke="#aeb1b3" stroke-width="1.3"/></svg><svg style="position:absolute;left:43px;top:485px;" width="14" height="12" viewBox="0 0 14 12"><path d="M0 0.5H5.6L7.2 2.3H14V11.5H0Z" fill="#62b543"/></svg><span style="position:absolute;left:61px;top:482.0px;line-height:18px;white-space:pre;color:#bbbbbb;font-family:'Liberation Sans','Noto Sans CJK SC',sans-serif;font-size:13px;font-weight:normal;letter-spacing:-0.094px;">tests</span><svg style="position:absolute;left:25px;top:506px;" width="11" height="11" viewBox="0 0 11 11"><path d="M0.7 2.7L4.7 6.5L8.7 2.7" fill="none" stroke="#aeb1b3" stroke-width="1.3"/></svg><svg style="position:absolute;left:43px;top:505px;" width="14" height="12" viewBox="0 0 14 12"><path d="M0 0.5H5.6L7.2 2.3H14V11.5H0Z" fill="#87939a"/></svg><span style="position:absolute;left:61px;top:502.0px;line-height:18px;white-space:pre;color:#8c8b1a;font-family:'Liberation Sans','Noto Sans CJK SC',sans-serif;font-size:13px;font-weight:normal;letter-spacing:0.208px;">vendor</span><svg style="position:absolute;left:43px;top:526px;" width="11" height="11" viewBox="0 0 11 11"><path d="M2.4 1.2L6.2 5.1L2.4 9" fill="none" stroke="#aeb1b3" stroke-width="1.3"/></svg><svg style="position:absolute;left:61px;top:525px;" width="14" height="12" viewBox="0 0 14 12"><path d="M0 0.5H5.6L7.2 2.3H14V11.5H0Z" fill="#87939a"/></svg><span style="position:absolute;left:79px;top:522.0px;line-height:18px;white-space:pre;color:#8c8b1a;font-family:'Liberation Sans','Noto Sans CJK SC',sans-serif;font-size:13px;font-weight:normal;letter-spacing:-0.206px;">asm89</span><svg style="position:absolute;left:43px;top:546px;" width="11" height="11" viewBox="0 0 11 11"><path d="M2.4 1.2L6.2 5.1L2.4 9" fill="none" stroke="#aeb1b3" stroke-width="1.3"/></svg><svg style="position:absolute;left:61px;top:545px;" width="14" height="12" viewBox="0 0 14 12"><path d="M0 0.5H5.6L7.2 2.3H14V11.5H0Z" fill="#87939a"/></svg><span style="position:absolute;left:79px;top:542.0px;line-height:18px;white-space:pre;color:#8c8b1a;font-family:'Liberation Sans','Noto Sans CJK SC',sans-serif;font-size:13px;font-weight:normal;letter-spacing:0.178px;">barryvdh</span><svg style="position:absolute;left:43px;top:566px;" width="11" height="11" viewBox="0 0 11 11"><path d="M2.4 1.2L6.2 5.1L2.4 9" fill="none" stroke="#aeb1b3" stroke-width="1.3"/></svg><svg style="position:absolute;left:61px;top:565px;" width="14" height="12" viewBox="0 0 14 12"><path d="M0 0.5H5.6L7.2 2.3H14V11.5H0Z" fill="#87939a"/></svg><span style="position:absolute;left:79px;top:562.0px;line-height:18px;white-space:pre;color:#8c8b1a;font-family:'Liberation Sans','Noto Sans CJK SC',sans-serif;font-size:13px;font-weight:normal;letter-spacing:-0.120px;">bin</span><svg style="position:absolute;left:43px;top:586px;" width="11" height="11" viewBox="0 0 11 11"><path d="M2.4 1.2L6.2 5.1L2.4 9" fill="none" stroke="#aeb1b3" stroke-width="1.3"/></svg><svg style="position:absolute;left:61px;top:585px;" width="14" height="12" viewBox="0 0 14 12"><path d="M0 0.5H5.6L7.2 2.3H14V11.5H0Z" fill="#87939a"/></svg><span style="position:absolute;left:79px;top:582.0px;line-height:18px;white-space:pre;color:#8c8b1a;font-family:'Liberation Sans','Noto Sans CJK SC',sans-serif;font-size:13px;font-weight:normal;letter-spacing:0.309px;">brick</span></div><div style="position:absolute;left:306px;top:85.5px;width:7.3px;height:187px;background:#5a5c5e;"></div><div style="position:absolute;left:31px;top:668.5px;width:214px;height:8.5px;background:rgba(130,130,130,0.45);"></div><div style="position:absolute;left:314px;top:57px;width:1px;height:621px;background:#323232;"></div><div style="position:absolute;left:315px;top:57px;width:1022px;height:28px;background:#3c3f41;"></div><div style="position:absolute;left:315px;top:84px;width:1023px;height:1px;background:#323232;"></div><div style="position:absolute;left:315px;top:85px;width:1023px;height:569px;background:#2b2b2b;"></div><div style="position:absolute;left:315px;top:85px;width:58px;height:569px;background:#313335;"></div><div style="position:absolute;left:668px;top:57px;width:142px;height:28px;background:#4e5254;"></div><div style="position:absolute;left:668px;top:82px;width:142px;height:3px;background:#4a88c7;"></div><svg style="position:absolute;left:324px;top:64px;" width="14" height="14" viewBox="0 0 14 14"><circle cx="7" cy="7" r="7" fill="#3e8ca8"/><text x="7" y="10" text-anchor="middle" font-family="Liberation Sans,sans-serif" font-weight="bold" font-size="8.2" fill="#27414c">C</text></svg><span style="position:absolute;left:343px;top:63.0px;line-height:18px;white-space:pre;color:#6897bb;font-family:'Liberation Sans','Noto Sans CJK SC',sans-serif;font-size:13px;font-weight:normal;letter-spacing:0.171px;">LoginController.php</span><svg style="position:absolute;left:465px;top:67.5px;" width="9" height="9" viewBox="0 0 9 9"><path d="M0.8 0.8L8.2 8.2M8.2 0.8L0.8 8.2" stroke="#6f7274" stroke-width="1"/></svg><svg style="position:absolute;left:490px;top:64px;" width="14" height="14" viewBox="0 0 14 14"><circle cx="7" cy="7" r="7" fill="#3e8ca8"/><text x="7" y="10" text-anchor="middle" font-family="Liberation Sans,sans-serif" font-weight="bold" font-size="8.2" fill="#27414c">C</text></svg><span style="position:absolute;left:509px;top:63.0px;line-height:18px;white-space:pre;color:#629755;font-family:'Liberation Sans','Noto Sans CJK SC',sans-serif;font-size:13px;font-weight:normal;letter-spacing:0.166px;">CommonController.php</span><svg style="position:absolute;left:653px;top:67.5px;" width="9" height="9" viewBox="0 0 9 9"><path d="M0.8 0.8L8.2 8.2M8.2 0.8L0.8 8.2" stroke="#6f7274" stroke-width="1"/></svg><svg style="position:absolute;left:676.8px;top:63px;" width="16" height="17" viewBox="0 0 16 17"><path d="M6.4 0.9V5H2Z" fill="#a4aeb5"/><path d="M7.6 0.9H12.3V8H2V6.1H7.6Z" fill="#8e99a1"/><rect x="0" y="8.8" width="15.3" height="7.3" fill="#fc6a1c"/><path d="M0 14.4L7.9 14.8M9.2 12.6L15.3 11.8M5.2 9.4L8.6 15.6M14.6 8.8L12 11.6L9.2 12.6" stroke="#4e5254" stroke-width="0.9" fill="none" opacity="0.85"/></svg><span style="position:absolute;left:696px;top:63.0px;line-height:18px;white-space:pre;color:#6897bb;font-family:'Liberation Sans','Noto Sans CJK SC',sans-serif;font-size:13px;font-weight:normal;letter-spacing:0.186px;">login.blade.php</span><svg style="position:absolute;left:794px;top:67.5px;" width="9" height="9" viewBox="0 0 9 9"><path d="M0.8 0.8L8.2 8.2M8.2 0.8L0.8 8.2" stroke="#8a8d8f" stroke-width="1"/></svg><svg style="position:absolute;left:818px;top:63px;" width="16" height="16" viewBox="0 0 16 16"><path d="M6 1H12V9H3V4Z" fill="#9aa7b0"/><path d="M3 4H6V1Z" fill="#62696e"/><rect x="0" y="9.2" width="15.3" height="6.3" fill="#dba843"/><text x="1.3" y="14.8" font-family="Liberation Sans,sans-serif" font-weight="bold" font-size="6.4" fill="#3a3326" textLength="7" lengthAdjust="spacingAndGlyphs">JS</text></svg><span style="position:absolute;left:837px;top:63.0px;line-height:18px;white-space:pre;color:#bbbbbb;font-family:'Liberation Sans','Noto Sans CJK SC',sans-serif;font-size:13px;font-weight:normal;letter-spacing:0.026px;">video.dev.js</span><svg style="position:absolute;left:911px;top:67.5px;" width="9" height="9" viewBox="0 0 9 9"><path d="M0.8 0.8L8.2 8.2M8.2 0.8L0.8 8.2" stroke="#6f7274" stroke-width="1"/></svg><svg style="position:absolute;left:936px;top:63px;" width="16" height="16" viewBox="0 0 16 16"><path d="M6 1H12V9H3V4Z" fill="#9aa7b0"/><path d="M3 4H6V1Z" fill="#62696e"/><rect x="0" y="9.2" width="15.3" height="6.3" fill="#a98cd9"/><text x="1.3" y="14.8" font-family="Liberation Sans,sans-serif" font-weight="bold" font-size="6" fill="#3a3326" textLength="12.8" lengthAdjust="spacingAndGlyphs">PHP</text></svg><span style="position:absolute;left:955px;top:63.0px;line-height:18px;white-space:pre;color:#6897bb;font-family:'Liberation Sans','Noto Sans CJK SC',sans-serif;font-size:13px;font-weight:normal;letter-spacing:0.142px;">admin.php</span><svg style="position:absolute;left:1024px;top:67.5px;" width="9" height="9" viewBox="0 0 9 9"><path d="M0.8 0.8L8.2 8.2M8.2 0.8L0.8 8.2" stroke="#6f7274" stroke-width="1"/></svg><svg style="position:absolute;left:1049.5px;top:63.5px;" width="12" height="15" viewBox="0 0 12 15"><path d="M3.4 0.5H11V14.3H0.5V3.4Z" fill="#9aa7b0"/><path d="M0.5 3.4H3.4V0.5Z" fill="#62696e"/><path d="M2.6 6H9M2.6 8.5H9M2.6 11H9" stroke="#3c3f41" stroke-width="1.1"/></svg><div style="position:absolute;left:1067px;top:60px;width:241px;height:24px;overflow:hidden;-webkit-mask-image:linear-gradient(90deg,#000 88%,transparent 99%);mask-image:linear-gradient(90deg,#000 88%,transparent 99%)"><span style="position:absolute;left:0px;top:3.0px;line-height:18px;white-space:pre;color:#8c8b1a;font-family:'Liberation Sans','Noto Sans CJK SC',sans-serif;font-size:13px;font-weight:normal;letter-spacing:-0.153px;">c0854f8ac99027b56d5933eab437d26e22f8.php</span></div><svg style="position:absolute;left:1316px;top:67px;" width="12" height="8" viewBox="0 0 12 8"><path d="M1 1L6 6L11 1" fill="none" stroke="#afb1b3" stroke-width="1.6"/></svg><div style="position:absolute;left:475px;top:287px;width:862px;height:22px;background:#232525;"></div><div style="position:absolute;left:374px;top:309px;width:963px;height:22px;background:#323232;"></div><div style="position:absolute;left:379px;top:331px;width:96px;height:22px;background:#232525;"></div><div style="position:absolute;left:315px;top:309px;width:47px;height:22px;background:#323232;"></div><div style="position:absolute;left:379px;top:111px;width:48px;height:22px;background:#253f3f;"></div><div style="position:absolute;left:379px;top:177px;width:32px;height:22px;background:#2a3f2d;"></div><div style="position:absolute;left:411px;top:199px;width:32px;height:22px;background:#3f3d26;"></div><div style="position:absolute;left:443px;top:265px;width:40px;height:22px;background:#4a2323;"></div><div style="position:absolute;left:547px;top:419px;width:40px;height:22px;background:#4d4a2e;"></div><div style="position:absolute;left:547px;top:551px;width:40px;height:22px;background:#4d4a2e;"></div><div style="position:absolute;left:787px;top:265px;width:16px;height:22px;background:#232525;"></div><div style="position:absolute;left:803px;top:265px;width:160px;height:22px;background:#384238;"></div><div style="position:absolute;left:963px;top:265px;width:16px;height:22px;background:#232525;"></div><div style="position:absolute;left:315px;top:85px;width:1023px;height:569px;overflow:hidden"><span class="ln" style="top:6px;color:#606366">14</span><span class="ln" style="top:28px;color:#606366">15</span><span class="ln" style="top:50px;color:#606366">16</span><span class="ln" style="top:72px;color:#606366">17</span><span class="ln" style="top:94px;color:#606366">18</span><span class="ln" style="top:116px;color:#606366">19</span><span class="ln" style="top:138px;color:#606366">20</span><span class="ln" style="top:160px;color:#606366">21</span><span class="ln" style="top:182px;color:#606366">22</span><span class="ln" style="top:204px;color:#606366">23</span><span class="ln" style="top:226px;color:#a4a3a3">24</span><span class="ln" style="top:248px;color:#606366">25</span><span class="ln" style="top:270px;color:#606366">26</span><span class="ln" style="top:292px;color:#606366">27</span><span class="ln" style="top:314px;color:#606366">28</span><span class="ln" style="top:336px;color:#606366">29</span><span class="ln" style="top:358px;color:#606366">30</span><span class="ln" style="top:380px;color:#606366">31</span><span class="ln" style="top:402px;color:#606366">32</span><span class="ln" style="top:424px;color:#606366">33</span><span class="ln" style="top:446px;color:#606366">34</span><span class="ln" style="top:468px;color:#606366">35</span><span class="ln" style="top:490px;color:#606366">36</span><span class="ln" style="top:512px;color:#606366">37</span><span class="ln" style="top:534px;color:#606366">38</span><span class="ln" style="top:556px;color:#606366">39</span><span class="cl" style="top:6px"><span class="tg">&lt;/head</span><span class="tg">&gt;</span></span><span class="cl" style="top:28px"><span class="tg">&lt;body</span><span class="tg">&gt;</span></span><span class="cl" style="top:50px"><span class="tg">&lt;input</span> <span class="an">type</span><span class="av">=&quot;hidden&quot;</span> <span class="an">id</span><span class="av">=&quot;TenantId&quot;</span> <span class="an">name</span><span class="av">=&quot;TenantId&quot;</span> <span class="an">value</span><span class="av">=&quot;&quot;</span> <span class="tg">/&gt;</span></span><span class="cl" style="top:72px"><span class="tg">&lt;div</span> <span class="an">class</span><span class="av">=&quot;header&quot;</span><span class="tg">&gt;</span><span class="tg">&lt;/div</span><span class="tg">&gt;</span></span><span class="cl" style="top:94px"><span class="tg">&lt;div</span> <span class="an">class</span><span class="av">=&quot;login<span class="typo">Wraper</span>&quot;</span><span class="tg">&gt;</span></span><span class="cl" style="top:116px">    <span class="tg">&lt;div</span> <span class="an">id</span><span class="av">=&quot;<span class="typo">loginform</span>&quot;</span> <span class="an">class</span><span class="av">=&quot;loginBox&quot;</span><span class="tg">&gt;</span></span><span class="cl" style="top:182px">        <span class="tg">&lt;form</span> <span class="an">class</span><span class="av">="form form-horizontal"</span> <span class="an">action</span><span class="av">="</span>{{route(<span style="color:#6a8759">'admin.login'</span>)}}<span class="av">"</span> <span class="an">method</span><span class="av">="post"</span><span class="tg">&gt;</span></span><span class="cl" style="top:204px">            <span style="color:#cc7832">@csrf</span></span><span class="cl" style="top:226px">            <span class="cm">{{-- <span class="cj">未登录用户的唯一标识，隐藏域</span> --}}</span></span><span class="cl" style="top:248px">            <span class="tg">&lt;input</span> <span class="an">type</span><span class="av">=&quot;hidden&quot;</span> <span class="an">id</span><span class="av">=&quot;client&quot;</span> <span class="an">name</span><span class="av">=&quot;client&quot;</span> <span class="tg">&gt;</span></span><span class="cl" style="top:270px">            <span class="tg">&lt;div</span> <span class="an">class</span><span class="av">=&quot;row cl&quot;</span><span class="tg">&gt;</span></span><span class="cl" style="top:292px">                <span class="tg">&lt;label</span> <span class="an">class</span><span class="av">=&quot;form-label col-xs-3&quot;</span><span class="tg">&gt;</span><span class="tg">&lt;i</span> <span class="an">class</span><span class="av">=&quot;Hui-iconfont&quot;</span><span class="tg">&gt;</span><span class="en">&amp;#xe60d;</span><span class="tg">&lt;/i</span><span class="tg">&gt;</span><span class="tg">&lt;/label</span><span class="tg">&gt;</span></span><span class="cl" style="top:314px">                <span class="tg">&lt;div</span> <span class="an">class</span><span class="av">=&quot;formControls col-xs-8&quot;</span><span class="tg">&gt;</span></span><span class="cl" style="top:336px">                    <span class="tg">&lt;input</span> <span class="an">id</span><span class="av">=&quot;&quot;</span> <span class="an">name</span><span class="av">=&quot;username&quot;</span> <span class="an">type</span><span class="av">=&quot;text&quot;</span> <span class="an">placeholder</span><span class="av">=&quot;<span class="cj">账户</span>&quot;</span> <span class="an">class</span><span class="av">=&quot;input-text size-L&quot;</span><span class="tg">&gt;</span></span><span class="cl" style="top:358px">                <span class="tg">&lt;/div</span><span class="tg">&gt;</span></span><span class="cl" style="top:380px">            <span class="tg">&lt;/div</span><span class="tg">&gt;</span></span><span class="cl" style="top:402px">            <span class="tg">&lt;div</span> <span class="an">class</span><span class="av">=&quot;row cl&quot;</span><span class="tg">&gt;</span></span><span class="cl" style="top:424px">                <span class="tg">&lt;label</span> <span class="an">class</span><span class="av">=&quot;form-label col-xs-3&quot;</span><span class="tg">&gt;</span><span class="tg">&lt;i</span> <span class="an">class</span><span class="av">=&quot;Hui-iconfont&quot;</span><span class="tg">&gt;</span><span class="en">&amp;#xe60e;</span><span class="tg">&lt;/i</span><span class="tg">&gt;</span><span class="tg">&lt;/label</span><span class="tg">&gt;</span></span><span class="cl" style="top:446px">                <span class="tg">&lt;div</span> <span class="an">class</span><span class="av">=&quot;formControls col-xs-8&quot;</span><span class="tg">&gt;</span></span><span class="cl" style="top:468px">                    <span class="tg">&lt;input</span> <span class="an">id</span><span class="av">=&quot;&quot;</span> <span class="an">name</span><span class="av">=&quot;password&quot;</span> <span class="an">type</span><span class="av">=&quot;password&quot;</span> <span class="an">placeholder</span><span class="av">=&quot;<span class="cj">密码</span>&quot;</span> <span class="an">class</span><span class="av">=&quot;input-text size-L&quot;</span><span class="tg">&gt;</span></span><span class="cl" style="top:490px">                <span class="tg">&lt;/div</span><span class="tg">&gt;</span></span><span class="cl" style="top:512px">            <span class="tg">&lt;/div</span><span class="tg">&gt;</span></span></div><div style="position:absolute;left:705px;top:311px;width:1.6px;height:18px;background:#bbbbbb;"></div><div style="position:absolute;left:362px;top:85px;width:2.2px;height:26px;background:#b3bce9;"></div><div style="position:absolute;left:362px;top:111px;width:2.2px;height:66px;background:#7fd9d9;"></div><div style="position:absolute;left:362px;top:177px;width:2.2px;height:22px;background:#6fc66f;"></div><div style="position:absolute;left:362px;top:199px;width:2.2px;height:66px;background:#d9cf62;"></div><div style="position:absolute;left:362px;top:265px;width:2.2px;height:389px;background:#e07b82;"></div><div style="position:absolute;left:364.3px;top:309px;width:8.7px;height:44px;background:#374d38;"></div><div style="position:absolute;left:364.5px;top:419px;width:8.5px;height:22px;background:#364757;"></div><div style="position:absolute;left:364.5px;top:551px;width:8.5px;height:22px;background:#364757;"></div><div style="position:absolute;left:364.5px;top:617px;width:8.5px;height:37px;background:#364757;"></div><div style="position:absolute;left:409px;top:221px;width:1px;height:433px;background:#3a3c3d;"></div><div style="position:absolute;left:441px;top:287px;width:1px;height:367px;background:#3a3c3d;"></div><div style="position:absolute;left:473px;top:375px;width:1px;height:88px;background:#3a3c3d;"></div><div style="position:absolute;left:473px;top:507px;width:1px;height:88px;background:#3a3c3d;"></div><div style="position:absolute;left:505px;top:419px;width:1px;height:22px;background:#3a3c3d;"></div><div style="position:absolute;left:505px;top:551px;width:1px;height:22px;background:#3a3c3d;"></div><div style="position:absolute;left:373px;top:85px;width:1px;height:526px;background:#55585a;"></div><svg style="position:absolute;left:369px;top:117.5px;" width="9" height="12" viewBox="0 0 9 12"><polygon points="0.5,0.5 8.5,0.5 8.5,7.6 4.5,11.5 0.5,7.6" fill="#2b2b2b" stroke="#606366" stroke-width="1"/><path d="M2.5 4.6H6.5" stroke="#606366" stroke-width="1"/></svg><svg style="position:absolute;left:369px;top:183.5px;" width="9" height="12" viewBox="0 0 9 12"><polygon points="0.5,0.5 8.5,0.5 8.5,7.6 4.5,11.5 0.5,7.6" fill="#2b2b2b" stroke="#606366" stroke-width="1"/><path d="M2.5 4.6H6.5" stroke="#606366" stroke-width="1"/></svg><svg style="position:absolute;left:369px;top:205.5px;" width="9" height="12" viewBox="0 0 9 12"><polygon points="0.5,0.5 8.5,0.5 8.5,7.6 4.5,11.5 0.5,7.6" fill="#2b2b2b" stroke="#606366" stroke-width="1"/><path d="M2.5 4.6H6.5" stroke="#606366" stroke-width="1"/></svg><svg style="position:absolute;left:369px;top:271.5px;" width="9" height="12" viewBox="0 0 9 12"><polygon points="0.5,0.5 8.5,0.5 8.5,7.6 4.5,11.5 0.5,7.6" fill="#2b2b2b" stroke="#606366" stroke-width="1"/><path d="M2.5 4.6H6.5" stroke="#606366" stroke-width="1"/></svg><svg style="position:absolute;left:369px;top:359.5px;" width="9" height="12" viewBox="0 0 9 12"><polygon points="0.5,0.5 8.5,0.5 8.5,7.6 4.5,11.5 0.5,7.6" fill="#2b2b2b" stroke="#606366" stroke-width="1"/><path d="M2.5 4.6H6.5" stroke="#606366" stroke-width="1"/></svg><svg style="position:absolute;left:369px;top:403.5px;" width="9" height="12" viewBox="0 0 9 12"><polygon points="0.5,0.5 8.5,0.5 8.5,7.6 4.5,11.5 0.5,7.6" fill="#2b2b2b" stroke="#606366" stroke-width="1"/><path d="M2.5 4.6H6.5" stroke="#606366" stroke-width="1"/></svg><svg style="position:absolute;left:369px;top:491.5px;" width="9" height="12" viewBox="0 0 9 12"><polygon points="0.5,0.5 8.5,0.5 8.5,7.6 4.5,11.5 0.5,7.6" fill="#2b2b2b" stroke="#606366" stroke-width="1"/><path d="M2.5 4.6H6.5" stroke="#606366" stroke-width="1"/></svg><svg style="position:absolute;left:369px;top:535.5px;" width="9" height="12" viewBox="0 0 9 12"><polygon points="0.5,0.5 8.5,0.5 8.5,7.6 4.5,11.5 0.5,7.6" fill="#2b2b2b" stroke="#606366" stroke-width="1"/><path d="M2.5 4.6H6.5" stroke="#606366" stroke-width="1"/></svg><svg style="position:absolute;left:369px;top:92.8px;" width="9" height="12" viewBox="0 0 9 12"><polygon points="0.5,11.3 0.5,4.6 4.5,0.5 8.5,4.6 8.5,11.3" fill="#2b2b2b" stroke="#606366" stroke-width="1"/><path d="M2.5 7.6H6.5" stroke="#606366" stroke-width="1"/></svg><svg style="position:absolute;left:369px;top:444.8px;" width="9" height="12" viewBox="0 0 9 12"><polygon points="0.5,11.3 0.5,4.6 4.5,0.5 8.5,4.6 8.5,11.3" fill="#2b2b2b" stroke="#606366" stroke-width="1"/><path d="M2.5 7.6H6.5" stroke="#606366" stroke-width="1"/></svg><svg style="position:absolute;left:369px;top:466.8px;" width="9" height="12" viewBox="0 0 9 12"><polygon points="0.5,11.3 0.5,4.6 4.5,0.5 8.5,4.6 8.5,11.3" fill="#2b2b2b" stroke="#606366" stroke-width="1"/><path d="M2.5 7.6H6.5" stroke="#606366" stroke-width="1"/></svg><svg style="position:absolute;left:369px;top:576.8px;" width="9" height="12" viewBox="0 0 9 12"><polygon points="0.5,11.3 0.5,4.6 4.5,0.5 8.5,4.6 8.5,11.3" fill="#2b2b2b" stroke="#606366" stroke-width="1"/><path d="M2.5 7.6H6.5" stroke="#606366" stroke-width="1"/></svg><svg style="position:absolute;left:369px;top:598.8px;" width="9" height="12" viewBox="0 0 9 12"><polygon points="0.5,11.3 0.5,4.6 4.5,0.5 8.5,4.6 8.5,11.3" fill="#2b2b2b" stroke="#606366" stroke-width="1"/><path d="M2.5 7.6H6.5" stroke="#606366" stroke-width="1"/></svg><svg style="position:absolute;left:387px;top:310px;" width="12" height="15" viewBox="0 0 12 15"><path d="M6 0.3C9.2 0.3 11.4 2.6 11.4 5.4C11.4 7.4 10.2 8.6 9.4 9.8H2.6C1.8 8.6 0.6 7.4 0.6 5.4C0.6 2.6 2.8 0.3 6 0.3Z" fill="#f0a830"/><path d="M3 11.3H9M3.6 13.5H8.4" stroke="#d8d8d8" stroke-width="1.2"/></svg><svg style="position:absolute;left:1198.5px;top:91.5px;" width="13" height="12" viewBox="0 0 13 12"><path d="M6.5 0.4L12.7 11.4H0.3Z" fill="#d9a017"/><path d="M6.5 4V7.8M6.5 8.8V10.2" stroke="#2b2b2b" stroke-width="1.5"/></svg><span style="position:absolute;left:1214px;top:89.5px;line-height:18px;white-space:pre;color:#bbbbbb;font-family:'Liberation Sans','Noto Sans CJK SC',sans-serif;font-size:12.5px;font-weight:normal;letter-spacing:0.047px;">39</span><svg style="position:absolute;left:1236px;top:91.5px;" width="13" height="12" viewBox="0 0 13 12"><path d="M6.5 0.4L12.7 11.4H0.3Z" fill="#8a7f62"/><path d="M6.5 4V7.8M6.5 8.8V10.2" stroke="#2b2b2b" stroke-width="1.5"/></svg><span style="position:absolute;left:1251.5px;top:89.5px;line-height:18px;white-space:pre;color:#bbbbbb;font-family:'Liberation Sans','Noto Sans CJK SC',sans-serif;font-size:12.5px;font-weight:normal;">1</span><svg style="position:absolute;left:1265px;top:92px;" width="14" height="14" viewBox="0 0 14 14"><path d="M1.6 6.2L5 9.4L12 1.8" fill="none" stroke="#499c54" stroke-width="2.2"/><path d="M1 12.6L3 11L5 12.6L7 11L9 12.6L11 11" fill="none" stroke="#499c54" stroke-width="0.9"/></svg><span style="position:absolute;left:1281px;top:89.5px;line-height:18px;white-space:pre;color:#bbbbbb;font-family:'Liberation Sans','Noto Sans CJK SC',sans-serif;font-size:12.5px;font-weight:normal;">3</span><svg style="position:absolute;left:1298px;top:95px;" width="10" height="7" viewBox="0 0 10 7"><path d="M1 6L5 1.6L9 6" fill="none" stroke="#bbbbbb" stroke-width="1.4"/></svg><svg style="position:absolute;left:1319px;top:95px;" width="10" height="7" viewBox="0 0 10 7"><path d="M1 1L5 5.4L9 1" fill="none" stroke="#bbbbbb" stroke-width="1.4"/></svg><div style="position:absolute;left:1322px;top:116px;width:14px;height:2.2px;background:#d6a01c;"></div><div style="position:absolute;left:1322px;top:142px;width:14px;height:2.2px;background:#d6a01c;"></div><div style="position:absolute;left:1322px;top:147px;width:14px;height:2.2px;background:#d6a01c;"></div><div style="position:absolute;left:1322px;top:152px;width:14px;height:2.2px;background:#d6a01c;"></div><div style="position:absolute;left:1322px;top:157px;width:14px;height:2.2px;background:#d6a01c;"></div><div style="position:absolute;left:1322px;top:163px;width:14px;height:2.2px;background:#d6a01c;"></div><div style="position:absolute;left:1327px;top:189px;width:8px;height:132px;background:rgba(140,140,140,0.32);"></div><div style="position:absolute;left:1318px;top:240px;width:2px;height:12px;background:#4e7c52;"></div><div style="position:absolute;left:1322px;top:267px;width:14px;height:2px;background:#d6a01c;"></div><div style="position:absolute;left:1318px;top:265.5px;width:2px;height:5px;background:#3f6d9e;"></div><div style="position:absolute;left:1322px;top:298px;width:14px;height:2px;background:#d6a01c;"></div><div style="position:absolute;left:1318px;top:297px;width:2px;height:5px;background:#3f6d9e;"></div><div style="position:absolute;left:1318px;top:314px;width:1.6px;height:103px;background:#3f6d9e;"></div><div style="position:absolute;left:1322px;top:334.5px;width:14px;height:7px;background:#d6a01c;"></div><div style="position:absolute;left:1322px;top:344.5px;width:14px;height:2px;background:#d6a01c;"></div><div style="position:absolute;left:1322px;top:350px;width:14px;height:2px;background:#d6a01c;"></div><div style="position:absolute;left:1322px;top:486.5px;width:14px;height:2px;background:#d6a01c;"></div><div style="position:absolute;left:1322px;top:492px;width:14px;height:2px;background:#d6a01c;"></div><div style="position:absolute;left:1318px;top:496px;width:1.6px;height:109px;background:#4e7c52;"></div><div style="position:absolute;left:1322px;top:542px;width:14px;height:1.6px;background:#7a7250;"></div><div style="position:absolute;left:315px;top:654px;width:1022px;height:23px;background:#313335;"></div><div style="position:absolute;left:315px;top:653px;width:1022px;height:1px;background:#3a3c3e;"></div><span style="position:absolute;left:383px;top:656.5px;line-height:18px;white-space:pre;color:#6897bb;font-family:'Liberation Sans','Noto Sans CJK SC',sans-serif;font-size:13px;font-weight:normal;letter-spacing:0.109px;">html</span><span style="position:absolute;left:432px;top:656.5px;line-height:18px;white-space:pre;color:#4e9aa8;font-family:'Liberation Sans','Noto Sans CJK SC',sans-serif;font-size:13px;font-weight:normal;letter-spacing:0.449px;">body</span><span style="position:absolute;left:486px;top:656.5px;line-height:18px;white-space:pre;color:#629755;font-family:'Liberation Sans','Noto Sans CJK SC',sans-serif;font-size:13px;font-weight:normal;letter-spacing:0.258px;">div.loginWraper</span><span style="position:absolute;left:603px;top:656.5px;line-height:18px;white-space:pre;color:#9a9a5a;font-family:'Liberation Sans','Noto Sans CJK SC',sans-serif;font-size:13px;font-weight:normal;letter-spacing:0.237px;">div#loginform.loginBox</span><span style="position:absolute;left:763px;top:656.5px;line-height:18px;white-space:pre;color:#c75450;font-family:'Liberation Sans','Noto Sans CJK SC',sans-serif;font-size:13px;font-weight:normal;letter-spacing:0.283px;">form.form.form-horizontal</span><svg style="position:absolute;left:417px;top:661px;" width="6" height="10" viewBox="0 0 6 10"><path d="M1 1L4.5 5L1 9" fill="none" stroke="#5e6163" stroke-width="1"/></svg><svg style="position:absolute;left:471px;top:661px;" width="6" height="10" viewBox="0 0 6 10"><path d="M1 1L4.5 5L1 9" fill="none" stroke="#5e6163" stroke-width="1"/></svg><svg style="position:absolute;left:588px;top:661px;" width="6" height="10" viewBox="0 0 6 10"><path d="M1 1L4.5 5L1 9" fill="none" stroke="#5e6163" stroke-width="1"/></svg><svg style="position:absolute;left:748px;top:661px;" width="6" height="10" viewBox="0 0 6 10"><path d="M1 1L4.5 5L1 9" fill="none" stroke="#5e6163" stroke-width="1"/></svg><div style="position:absolute;left:1337px;top:57px;width:21px;height:621px;background:#3c3f41;"></div><div style="position:absolute;left:1336.5px;top:57px;width:1px;height:621px;background:#323232;"></div><svg style="position:absolute;left:1341.5px;top:67.5px;" width="12" height="13" viewBox="0 0 12 13"><g fill="#afb1b3"><ellipse cx="6" cy="2.4" rx="5.8" ry="2.3"/><path d="M0.2 4.4C1.5 6 10.5 6 11.8 4.4V5.6C10.5 7.6 1.5 7.6 0.2 5.6ZM0.2 7.4C1.5 9 10.5 9 11.8 7.4V8.6C10.5 10.6 1.5 10.6 0.2 8.6ZM0.2 10.2C1.5 11.8 10.5 11.8 11.8 10.2V11C10.5 13.2 1.5 13.2 0.2 11Z"/></g></svg><span style="position:absolute;left:1355.0px;top:86px;line-height:16px;white-space:pre;color:#bbbbbb;font-family:'Liberation Sans','Noto Sans CJK SC',sans-serif;font-size:12.5px;transform-origin:0 0;transform:rotate(90deg) scaleX(0.8876)">Database</span><div style="position:absolute;left:8px;top:677px;width:1350px;height:1px;background:#323232;"></div><svg style="position:absolute;left:39.5px;top:684px;" width="11" height="11" viewBox="0 0 11 11"><path d="M1.5 0V10.9" stroke="#afb1b3" stroke-width="2.1"/><path d="M1.5 7H7.4V3.6" fill="none" stroke="#afb1b3" stroke-width="1.9"/><path d="M4.2 4.4L7.4 0.1L10.6 4.4Z" fill="#afb1b3"/></svg><svg style="position:absolute;left:90px;top:685px;" width="8" height="10" viewBox="0 0 8 10"><path d="M0.3 0.3L7.8 4.8L0.3 9.4Z" fill="#9da0a2"/></svg><svg style="position:absolute;left:147px;top:685px;" width="11" height="9" viewBox="0 0 11 9"><path d="M0 1H2M3.4 1H10.6M0 4.3H2M3.4 4.3H10.6M0 7.6H2M3.4 7.6H10.6" stroke="#afb1b3" stroke-width="1.7"/></svg><svg style="position:absolute;left:214.5px;top:683.5px;" width="11" height="11" viewBox="0 0 11 11"><circle cx="5.5" cy="5.5" r="5.3" fill="#afb1b3"/><path d="M5.5 2.4V6M5.5 7.4V8.8" stroke="#3c3f41" stroke-width="1.6"/></svg><svg style="position:absolute;left:302px;top:684px;" width="12" height="10.5" viewBox="0 0 12 10.5"><rect width="11.4" height="10.2" fill="#afb1b3"/><path d="M2 2.4L4.6 4.8L2 7.2M5.6 8H9.4" fill="none" stroke="#3c3f41" stroke-width="1.2"/></svg><span style="position:absolute;left:55.5px;top:681.0px;line-height:18px;white-space:pre;color:#bbbbbb;font-family:'Liberation Sans','Noto Sans CJK SC',sans-serif;font-size:12.5px;font-weight:normal;letter-spacing:-0.495px;">Git</span><span style="position:absolute;left:105.5px;top:681.0px;line-height:18px;white-space:pre;color:#bbbbbb;font-family:'Liberation Sans','Noto Sans CJK SC',sans-serif;font-size:12.5px;font-weight:normal;letter-spacing:-0.979px;">Run</span><span style="position:absolute;left:162px;top:681.0px;line-height:18px;white-space:pre;color:#bbbbbb;font-family:'Liberation Sans','Noto Sans CJK SC',sans-serif;font-size:12.5px;font-weight:normal;letter-spacing:-0.973px;">TODO</span><span style="position:absolute;left:231.5px;top:681.0px;line-height:18px;white-space:pre;color:#bbbbbb;font-family:'Liberation Sans','Noto Sans CJK SC',sans-serif;font-size:12.5px;font-weight:normal;letter-spacing:-0.537px;">Problems</span><span style="position:absolute;left:318px;top:681.0px;line-height:18px;white-space:pre;color:#bbbbbb;font-family:'Liberation Sans','Noto Sans CJK SC',sans-serif;font-size:12.5px;font-weight:normal;letter-spacing:-0.344px;">Terminal</span><svg style="position:absolute;left:1257px;top:683.5px;" width="13.5" height="13" viewBox="0 0 13.5 13"><path d="M12.4 12.2V6.4A5.7 5.7 0 1 0 6.7 12.2Z" fill="none" stroke="#afb1b3" stroke-width="1.3"/></svg><span style="position:absolute;left:1274.5px;top:681.0px;line-height:18px;white-space:pre;color:#bbbbbb;font-family:'Liberation Sans','Noto Sans CJK SC',sans-serif;font-size:12.5px;font-weight:normal;letter-spacing:-0.589px;">Event Log</span><div style="position:absolute;left:8px;top:699px;width:1350px;height:1px;background:#474a4c;"></div><svg style="position:absolute;left:14px;top:704px;" width="13" height="13" viewBox="0 0 13 13"><rect x="3" y="0.6" width="9.2" height="9.2" fill="none" stroke="#afb1b3" stroke-width="1.2"/><path d="M0.6 3V12.2H9.8" fill="none" stroke="#afb1b3" stroke-width="1.2"/></svg><span style="position:absolute;left:989px;top:700.5px;line-height:18px;white-space:pre;color:#a3a5a6;font-family:'Liberation Sans','Noto Sans CJK SC',sans-serif;font-size:12.5px;font-weight:normal;letter-spacing:-0.379px;">PHP: 7.3</span><span style="position:absolute;left:1048px;top:700.5px;line-height:18px;white-space:pre;color:#a3a5a6;font-family:'Liberation Sans','Noto Sans CJK SC',sans-serif;font-size:12.5px;font-weight:normal;letter-spacing:-0.056px;">24:33</span><span style="position:absolute;left:1091px;top:700.5px;line-height:18px;white-space:pre;color:#a3a5a6;font-family:'Liberation Sans','Noto Sans CJK SC',sans-serif;font-size:12.5px;font-weight:normal;letter-spacing:-1.297px;">LF</span><span style="position:absolute;left:1115px;top:700.5px;line-height:18px;white-space:pre;color:#a3a5a6;font-family:'Liberation Sans','Noto Sans CJK SC',sans-serif;font-size:12.5px;font-weight:normal;letter-spacing:-0.484px;">UTF-8</span><div style="position:absolute;left:82.5px;top:467.5px;width:226px;height:42px;border:3.2px solid #f5241a;border-radius:4px"></div><div style="position:absolute;left:435px;top:300px;width:462px;height:57.5px;border:3.3px solid #f5241a;border-radius:4px"></div><div style="position:absolute;left:1361.5px;top:569px;width:4.5px;height:103px;background:#bfc3d0;"></div><div style="position:absolute;left:1358px;top:69.5px;width:8px;height:1px;background:#d5d5d5;"></div><div style="position:absolute;left:1358px;top:128.5px;width:8px;height:1px;background:#d9d9d9;"></div><div style="position:absolute;left:1358px;top:157px;width:8px;height:1px;background:#d9d9d9;"></div><div style="position:absolute;left:0px;top:69.5px;width:8px;height:1px;background:#dcdcdc;"></div><div style="position:absolute;left:0px;top:128px;width:8px;height:1px;background:#dcdcdc;"></div><div style="position:absolute;left:0px;top:157px;width:8px;height:1px;background:#dcdcdc;"></div><div style="position:absolute;left:1355px;top:320px;width:9px;height:60px;border-radius:4.5px;background:#fff;box-shadow:0 0 3px rgba(0,0,0,.45)"></div><div style="position:absolute;left:1356.5px;top:321.5px;width:6px;height:57px;border-radius:3px;background:linear-gradient(#555 0,#777 9px,#19c46a 10px,#19c46a 70%,#7ee08f 100%)"></div><div style="position:absolute;left:1150px;top:702px;width:216px;height:25px;background:#fff;border:1px solid #a9c6ee;border-radius:4px"></div><svg style="position:absolute;left:1136.5px;top:693.3px;" width="40" height="34" viewBox="0 0 40 34"><defs><linearGradient id="sg" x1="0" y1="0" x2="0" y2="1"><stop offset="0" stop-color="#f5712a"/><stop offset="1" stop-color="#e8490f"/></linearGradient></defs><g transform="translate(3.8,10.5) rotate(-13.8)"><rect x="0" y="0" width="26" height="31" rx="3.5" fill="url(#sg)"/><text x="0" y="0" text-anchor="middle" font-family="Liberation Sans,sans-serif" font-weight="bold" font-style="italic" font-size="24" fill="#fff" transform="translate(12.6,20.8) scale(1.42,1)">S</text></g></svg><span style="position:absolute;left:1177.5px;top:706.5px;line-height:18px;white-space:pre;color:#1769e0;font-family:'Liberation Sans','Noto Sans CJK SC',sans-serif;font-size:14.5px;font-weight:bold;">中</span><svg style="position:absolute;left:1203px;top:710px;" width="13" height="12" viewBox="0 0 13 12"><circle cx="3.4" cy="3.4" r="2.1" fill="none" stroke="#1769e0" stroke-width="1.5"/><path d="M9.6 4.6C11.6 4.6 12 6.8 10.8 8.6L9.2 10.8L8.4 10.4L9.4 7.8C8.2 7.4 8.2 4.6 9.6 4.6Z" fill="#1769e0"/></svg><svg style="position:absolute;left:1226px;top:708px;" width="15" height="15" viewBox="0 0 15 15"><circle cx="7.5" cy="7.5" r="7.5" fill="#1769e0"/><circle cx="4.9" cy="5.4" r="1.1" fill="#fff"/><circle cx="10.1" cy="5.4" r="1.1" fill="#fff"/><path d="M3.2 8.4H11.8C11.6 11 9.8 12.6 7.5 12.6C5.2 12.6 3.4 11 3.2 8.4Z" fill="#fff"/></svg><svg style="position:absolute;left:1251px;top:707px;" width="13" height="16" viewBox="0 0 13 16"><rect x="4" y="0.5" width="5" height="9" rx="2.5" fill="#1769e0"/><path d="M1.4 6.4C1.4 10 3.6 11.6 6.5 11.6C9.4 11.6 11.6 10 11.6 6.4M6.5 11.6V15M3.8 15.2H9.2" fill="none" stroke="#1769e0" stroke-width="1.4"/></svg><svg style="position:absolute;left:1274px;top:709px;" width="16" height="12" viewBox="0 0 16 12"><rect x="0.5" y="0.5" width="15" height="11" rx="1.5" fill="#1769e0"/><path d="M2.5 3.4H4M5.5 3.4H7M8.5 3.4H10M11.5 3.4H13.5M2.5 6H4M5.5 6H7M8.5 6H10M11.5 6H13.5M4 8.8H12" stroke="#fff" stroke-width="1.2"/></svg><svg style="position:absolute;left:1298px;top:707px;" width="17" height="16" viewBox="0 0 17 16"><circle cx="6.5" cy="4.2" r="3.6" fill="#1769e0"/><path d="M0 15.5C0 11.2 2.6 9 6.5 9C10.4 9 13 11.2 13 15.5Z" fill="#1769e0"/><rect x="8.5" y="9" width="8.5" height="7" fill="#1769e0"/><text x="12.8" y="15" text-anchor="middle" font-family="Liberation Sans,sans-serif" font-size="6" fill="#fff">19</text></svg><svg style="position:absolute;left:1322px;top:708px;" width="15" height="15" viewBox="0 0 15 15"><path d="M4.4 0.5C5.6 1.8 9.4 1.8 10.6 0.5L14.6 2.8L13 6.2L11.6 5.6V14.5H3.4V5.6L2 6.2L0.4 2.8Z" fill="#1769e0"/></svg><svg style="position:absolute;left:1347px;top:708px;" width="14" height="14" viewBox="0 0 14 14"><rect x="0" y="0" width="6" height="6" rx="1.4" fill="#1769e0"/><rect x="8" y="0" width="6" height="6" rx="1.4" fill="#1769e0"/><rect x="0" y="8" width="6" height="6" rx="1.4" fill="#1769e0"/><rect x="8" y="8" width="6" height="6" rx="1.4" fill="#1769e0"/></svg><span style="position:absolute;left:1255px;top:697.5px;line-height:18px;white-space:pre;color:#ffffff;font-family:'Liberation Sans','Noto Sans CJK SC',sans-serif;font-size:14.5px;font-weight:bold;letter-spacing:-1.092px;text-shadow:0 0 1.2px #000,0 0 1.2px #000,0 0 2px rgba(0,0,0,.6);">@掘金技术社区</span>
</body></html>
